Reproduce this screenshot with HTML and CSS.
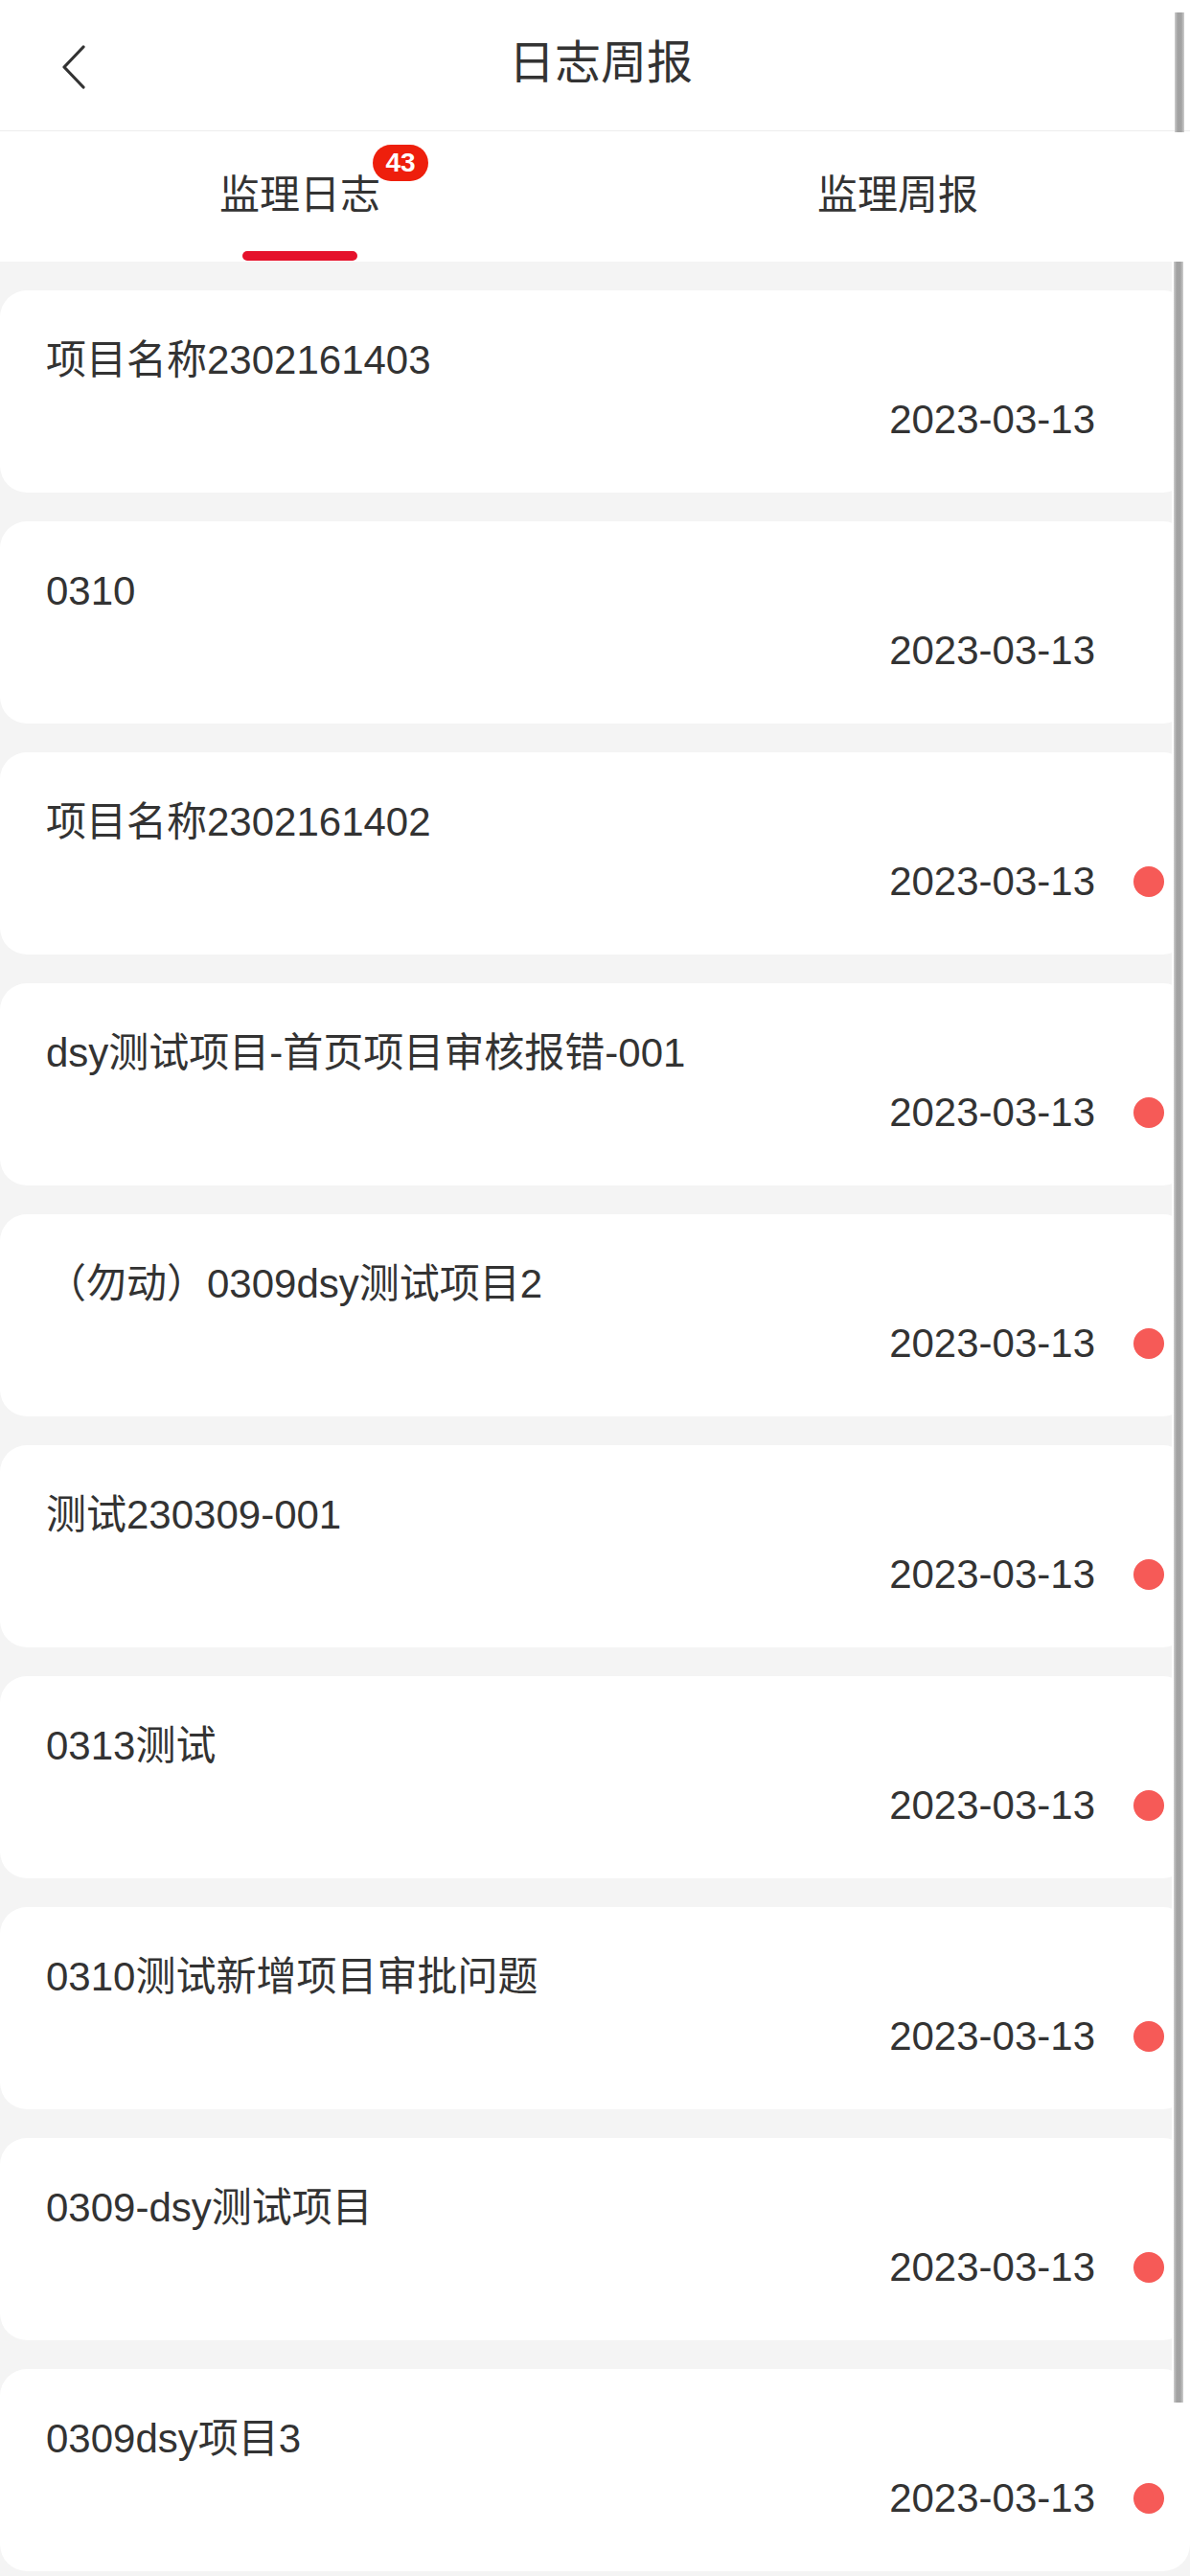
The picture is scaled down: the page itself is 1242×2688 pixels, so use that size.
FILE: index.html
```html
<!DOCTYPE html>
<html lang="zh-CN">
<head>
  <meta charset="UTF-8" />
  <title>日志周报</title>
  <link rel="stylesheet" href="styles.css">
</head>
<body>
  <div class="header">
    <a class="back" href="#">
      <svg width="26" height="46" viewBox="0 0 26 46"><path d="M23 2 L3 23 L23 44" fill="none" stroke="#333" stroke-width="3.2" stroke-linecap="round" stroke-linejoin="round"/></svg>
    </a>
    <div class="title">日志周报</div>
  </div>
  <div class="tabs">
    <div class="tab active">
      <span class="tab-label">监理日志<span class="badge">43</span></span>
      <div class="tab-line"></div>
    </div>
    <div class="tab">
      <span class="tab-label">监理周报</span>
      <div class="tab-line"></div>
    </div>
  </div>
  <div class="list">
    <div class="card">
      <div class="card-title">项目名称2302161403</div>
      <div class="card-foot"><span class="date">2023-03-13</span><span class="dot off"></span></div>
    </div>
    <div class="card">
      <div class="card-title">0310</div>
      <div class="card-foot"><span class="date">2023-03-13</span><span class="dot off"></span></div>
    </div>
    <div class="card">
      <div class="card-title">项目名称2302161402</div>
      <div class="card-foot"><span class="date">2023-03-13</span><span class="dot"></span></div>
    </div>
    <div class="card">
      <div class="card-title">dsy测试项目-首页项目审核报错-001</div>
      <div class="card-foot"><span class="date">2023-03-13</span><span class="dot"></span></div>
    </div>
    <div class="card">
      <div class="card-title">（勿动）0309dsy测试项目2</div>
      <div class="card-foot"><span class="date">2023-03-13</span><span class="dot"></span></div>
    </div>
    <div class="card">
      <div class="card-title">测试230309-001</div>
      <div class="card-foot"><span class="date">2023-03-13</span><span class="dot"></span></div>
    </div>
    <div class="card">
      <div class="card-title">0313测试</div>
      <div class="card-foot"><span class="date">2023-03-13</span><span class="dot"></span></div>
    </div>
    <div class="card">
      <div class="card-title">0310测试新增项目审批问题</div>
      <div class="card-foot"><span class="date">2023-03-13</span><span class="dot"></span></div>
    </div>
    <div class="card">
      <div class="card-title">0309-dsy测试项目</div>
      <div class="card-foot"><span class="date">2023-03-13</span><span class="dot"></span></div>
    </div>
    <div class="card">
      <div class="card-title">0309dsy项目3</div>
      <div class="card-foot"><span class="date">2023-03-13</span><span class="dot"></span></div>
    </div>
  </div>
  <!-- scrollbars drawn over the page -->
  <div class="scroll-top"></div>
  <div class="scroll-track"><div class="scroll-thumb"></div></div>
</body>
</html>
```

FILE: styles.css
```css
html, body {
  margin: 0;
  padding: 0;
  font-family: "Liberation Sans", "Noto Sans CJK SC", sans-serif;
  background-color: #f4f4f4;
  color: #333;
  overflow: hidden;
}

.header {
  position: relative;
  height: 136px;
  display: flex;
  justify-content: center;
  align-items: center;
  background: #fff;
  border-bottom: 1px solid #ededed;
}

.back {
  position: absolute;
  left: 64px;
  top: 47px;
  display: block;
  line-height: 0;
}

.title {
  font-size: 48px;
  line-height: 56px;
  color: #333;
  margin-top: -4px;
  margin-left: 12px;
}

.tabs {
  display: flex;
  height: 136px;
  background: #fff;
}

.tab {
  flex: 1;
  display: flex;
  flex-direction: column;
  align-items: center;
  padding-top: 42px;
  padding-left: 8px;
  box-sizing: border-box;
}

.tab:last-child {
  padding-left: 14px;
}

.tab-label {
  position: relative;
  font-size: 42px;
  line-height: 50px;
  color: #333;
}

.badge {
  position: absolute;
  left: calc(100% - 8px);
  top: -28px;
  min-width: 58px;
  height: 38px;
  padding: 0 8px;
  box-sizing: border-box;
  border-radius: 19px;
  background: #ee1f0c;
  color: #fff;
  font-size: 28px;
  font-weight: bold;
  line-height: 38px;
  text-align: center;
}

.tab-line {
  width: 120px;
  height: 10px;
  margin-top: 33px;
  border-radius: 5px;
}

.tab.active .tab-line {
  background: #e5112b;
}

.list {
  display: flex;
  flex-direction: column;
  gap: 30px;
  padding-top: 30px;
}

.card {
  background: #fff;
  border-radius: 28px;
  padding: 48px 27px 51px 48px;
}

.card-title {
  font-size: 42px;
  line-height: 50px;
  white-space: nowrap;
}

.card-foot {
  display: flex;
  justify-content: flex-end;
  align-items: center;
  margin-top: 12px;
  height: 50px;
}

.date {
  font-size: 42px;
  line-height: 50px;
}

.dot {
  width: 32px;
  height: 32px;
  margin-left: 40px;
  border-radius: 50%;
  background: #f65a57;
}

.dot.off {
  background: transparent;
}

.scroll-top {
  position: absolute;
  left: 1226px;
  top: 13px;
  width: 10px;
  height: 125px;
  background: linear-gradient(to right, #cfcfcf, #a2a2a2 30%, #a2a2a2 70%, #cfcfcf);
}

.scroll-track {
  position: absolute;
  left: 1223px;
  top: 273px;
  width: 19px;
  height: 2234px;
  background: #fff;
}

.scroll-thumb {
  margin-left: 2px;
  width: 10px;
  height: 100%;
  background: linear-gradient(to right, #cfcfcf, #a2a2a2 30%, #a2a2a2 70%, #cfcfcf);
}
```
